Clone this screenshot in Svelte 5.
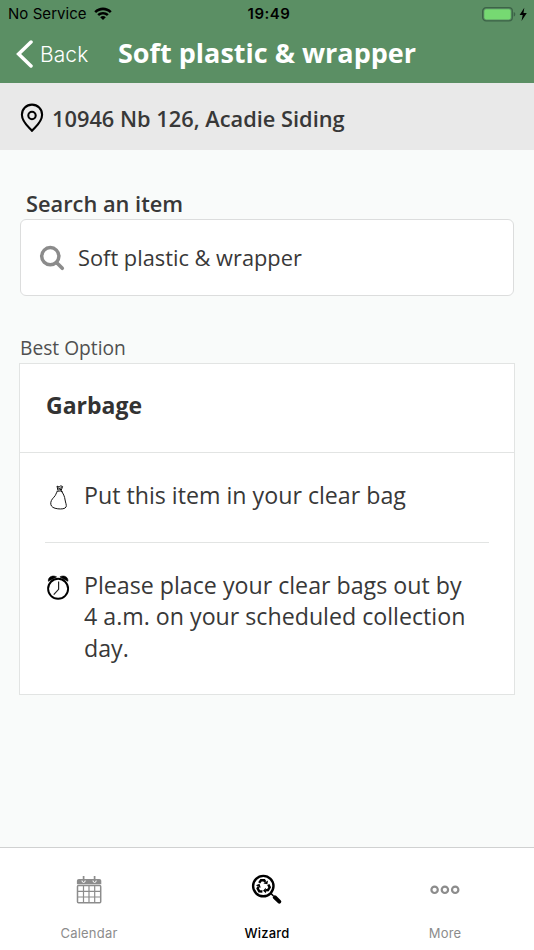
<script lang="ts">
  const address = '10946 Nb 126, Acadie Siding';
  const tabs = [
    { id: 'calendar', label: 'Calendar' },
    { id: 'wizard', label: 'Wizard' },
    { id: 'more', label: 'More' }
  ];
  // the three arrows of the recycling sign are one shape, turned
  const turns = [0, 120, 240];

  let item = $state('Soft plastic & wrapper');
  let activeTab = $state('wizard');
</script>

<div class="screen">
  <header>
    <div class="status-bar">
      <div class="carrier">
        <span>No Service</span>
        <svg width="18" height="14" viewBox="0 0 18 14">
          <path d="M0.3 4.3C5.3-.7 12.7-.7 17.7 4.3L15.9 6.1C11.9 2.3 6.1 2.3 2.1 6.1Z" />
          <path d="M3.3 7.3C6.6 4.2 11.4 4.2 14.7 7.3L12.9 9.1C10.6 7.1 7.4 7.1 5.1 9.1Z" />
          <path d="M6.2 10.2C7.9 8.7 10.1 8.7 11.8 10.2L9 13.1Z" />
        </svg>
      </div>
      <span class="time">19:49</span>
      <div class="battery">
        <svg width="46" height="16" viewBox="0 0 46 16">
          <rect x="0.7" y="1.7" width="29.6" height="13.2" rx="3.4" fill="none" stroke="#3c6347" stroke-width="1.3" />
          <rect x="2.3" y="3.2" width="26.4" height="10.2" rx="1.8" fill="#76d972" />
          <path d="M31.7 6C33.8 6.7 33.8 9.9 31.7 10.6Z" fill="#3c6347" />
          <path d="M42.3 1.8L37.6 9H40.7L39.5 14.9L44.8 7H41.5Z" />
        </svg>
      </div>
    </div>
    <div class="nav-bar">
      <button class="back">
        <svg width="17" height="28" viewBox="0 0 17 28">
          <path d="M15 2L2.6 14L15 26" fill="none" stroke="#fff" stroke-width="3.5" stroke-linecap="round" />
        </svg>
        <span>Back</span>
      </button>
      <h1>Soft plastic &amp; wrapper</h1>
    </div>
  </header>

  <div class="address">
    <svg width="24" height="30" viewBox="0 0 24 30">
      <g fill="none" stroke="#000">
        <path d="M12 27.8C9.5 24.6 1.9 19.3 1.9 11.7A10.1 10.1 0 0 1 22.1 11.7C22.1 19.3 14.5 24.6 12 27.8Z" stroke-width="2.1" stroke-linejoin="round" />
        <circle cx="12" cy="12.5" r="3.7" stroke-width="2.1" />
      </g>
    </svg>
    <span>{address}</span>
  </div>

  <main>
    <label for="item">Search an item</label>
    <div class="search">
      <svg width="26" height="26" viewBox="0 0 26 26">
        <g fill="none" stroke="#8b8b8b" stroke-linecap="round">
          <circle cx="11.3" cy="11.2" r="8.6" stroke-width="3.5" />
          <path d="M18 18L23.3 23.3" stroke-width="3.6" />
        </g>
      </svg>
      <input id="item" type="text" bind:value={item} />
    </div>

    <h2>Best Option</h2>
    <section class="card">
      <h3>Garbage</h3>
      <div class="step">
        <svg width="26" height="26" viewBox="0 0 26 26">
          <g fill="none" stroke="#111" stroke-width="1" stroke-linejoin="round">
            <path d="M12.3 7.5C10.9 9.3 11.1 11 8.9 13.2C6.8 15.3 5.4 17.6 5.8 20.3C6.2 23 8.8 24.3 12.8 24.8C16.1 25.2 20.3 25 21.1 22.9C21.8 21 20.5 18.8 20.1 16C19.7 12.6 18.3 9.4 16.2 7" />
            <path d="M11.6 7.3L16.8 6.8M12.9 6.3L12 2.1L14.1 3L15.8 1.8L17.6 2.5L16.2 6.3M12.8 3.6L16.2 6M16.8 3L13.3 6M15.8 6.8L18 8.3" />
          </g>
        </svg>
        <p>Put this item in your clear bag</p>
      </div>
      <div class="step">
        <svg width="26" height="26" viewBox="0 0 26 26">
          <circle cx="13.1" cy="14.8" r="10" fill="none" stroke="#000" stroke-width="1.9" />
          <path d="M3.4 7.3C2.6 3.2 7.6.6 11.6 2.9ZM14.9 2.9C18.9.6 23.6 3.2 22.9 7.3Z" stroke="#000" stroke-width="0.6" />
          <path d="M13.6 7.6V15.3L8.7 20.6" fill="none" stroke="#222" stroke-width="1.2" />
        </svg>
        <p>Please place your clear bags out by 4&nbsp;a.m. on your scheduled collection day.</p>
      </div>
    </section>
  </main>

  <nav>
    {#each tabs as tab (tab.id)}
      <button class="tab" class:active={tab.id === activeTab} onclick={() => (activeTab = tab.id)}>
        <svg width="34" height="34" viewBox="0 0 34 34">
          {#if tab.id === 'calendar'}
            <path d="M4.9 11.2V7.7Q4.9 6 6.9 6H27.4Q29.3 6 29.3 7.7V11.2Z" />
            <g fill="none" stroke="currentColor">
              <rect x="5.5" y="12.6" width="23.2" height="17.2" rx="1" stroke-width="1.5" />
              <path d="M11.5 12.5V30M17 12.5V30M22.7 12.5V30M5.5 18.3H29M5.5 24H29" stroke-width="1.2" />
              <path d="M11.6 3V8M22.6 3V8" stroke-width="1.7" />
            </g>
            <path d="M10 7.5Q10 9.5 11.6 9.5T13.2 7.5M21 7.5Q21 9.5 22.6 9.5T24.2 7.5" fill="none" stroke="#fff" stroke-width="1" />
          {:else if tab.id === 'wizard'}
            <circle cx="13.3" cy="13.1" r="10.2" fill="none" stroke="currentColor" stroke-width="2.4" />
            {#each turns as turn}
              <g transform="rotate({turn} 13.3 13.3)">
                <path d="M9.2 9.9L11 7.3H14.2L15.3 9" fill="none" stroke="currentColor" stroke-width="2.5" />
                <path d="M13.4 10.4L17.4 11.3L18 7.4Z" />
              </g>
            {/each}
            <path d="M20.8 20.4L23.5 23" stroke="currentColor" stroke-width="1.5" />
            <path d="M24.8 24.3L29.3 28.6" stroke="currentColor" stroke-width="4" stroke-linecap="round" />
          {:else}
            <g fill="none" stroke="currentColor" stroke-width="2.2">
              <circle cx="6.6" cy="16.8" r="3.2" />
              <circle cx="16.9" cy="16.8" r="3.2" />
              <circle cx="27.2" cy="16.8" r="3.2" />
            </g>
          {/if}
        </svg>
        <span>{tab.label}</span>
      </button>
    {/each}
  </nav>
</div>

<style>
  :global(body) {
    margin: 0;
  }

  .screen {
    display: flex;
    flex-direction: column;
    height: 950px;
    background: #f9fbfa;
    color: #383838;
    font-family: 'Open Sans', sans-serif;
  }

  svg {
    display: block;
    flex: none;
  }

  button {
    padding: 0;
    border: none;
    background: none;
    cursor: pointer;
  }

  h1,
  h2,
  h3,
  p {
    margin: 0;
  }

  header {
    box-sizing: border-box;
    height: 83px;
    background: #5b8f64;
  }

  .status-bar {
    display: grid;
    grid-template-columns: 1fr auto 1fr;
    align-items: center;
    height: 27px;
    padding: 0 6px 0 8px;
    color: #000;
    font-family: Inter, sans-serif;
    font-size: 15px;
  }

  .carrier {
    display: flex;
    align-items: center;
    gap: 7px;
    letter-spacing: 0.05px;
  }

  .time {
    padding-left: 2px;
    font-weight: 600;
    letter-spacing: 0.5px;
  }

  .battery {
    justify-self: end;
  }

  .nav-bar {
    display: flex;
    align-items: center;
    height: 54px;
    padding-left: 16px;
  }

  .back {
    display: flex;
    align-items: center;
    gap: 7px;
    width: 102px;
    color: #fff;
    font-family: Inter, sans-serif;
    font-size: 21px;
    font-weight: 300;
    letter-spacing: 0.1px;
  }

  h1 {
    padding-bottom: 3px;
    color: #fff;
    font-size: 27px;
    font-weight: 700;
    line-height: 36px;
    white-space: nowrap;
  }

  .address {
    display: flex;
    align-items: center;
    gap: 8px;
    box-sizing: border-box;
    height: 67px;
    padding: 3px 20px 0;
    background: #e9e9e9;
    font-size: 21.8px;
    font-weight: 600;
  }

  main {
    flex: 1;
    padding: 39px 20px 0;
  }

  label {
    display: block;
    padding-left: 6px;
    font-size: 21.8px;
    font-weight: 600;
    line-height: 30px;
  }

  .search {
    display: flex;
    align-items: center;
    gap: 13px;
    box-sizing: border-box;
    height: 77px;
    padding: 0 18px;
    border: 1px solid #dcdddd;
    border-radius: 6px;
    background: #fff;
  }

  input {
    flex: 1;
    min-width: 0;
    padding: 0;
    border: none;
    outline: none;
    background: none;
    color: #383838;
    font: 21.8px 'Open Sans', sans-serif;
  }

  h2 {
    margin-top: 37px;
    padding-bottom: 1px;
    color: #505050;
    font-size: 19.2px;
    font-weight: 400;
    line-height: 29px;
  }

  .card {
    box-sizing: border-box;
    height: 332px;
    margin: 0 -1px;
    border: 1px solid #e2e4e3;
    background: #fff;
  }

  h3 {
    padding: 0 26px 6px;
    border-bottom: 1px solid #e2e4e3;
    color: #333;
    font-size: 23px;
    font-weight: 700;
    line-height: 82px;
  }

  .step {
    display: flex;
    gap: 13px;
    margin: 0 25px;
    padding: 27px 0 30px;
  }

  .step + .step {
    border-top: 1px solid #e2e4e3;
  }

  .step svg {
    margin-top: 4px;
  }

  .step p {
    font-size: 23.2px;
    line-height: 31.5px;
  }

  nav {
    display: grid;
    grid-template-columns: repeat(3, 1fr);
    box-sizing: border-box;
    height: 103px;
    border-top: 1px solid #d0d1d1;
    background: #fff;
  }

  .tab {
    display: flex;
    flex-direction: column;
    align-items: center;
    gap: 17px;
    padding-top: 25px;
    color: #8c8c8c;
    font-family: Inter, sans-serif;
    font-size: 13px;
    letter-spacing: 0.2px;
    line-height: 18px;
  }

  .tab svg {
    fill: currentColor;
  }

  .tab.active {
    color: #000;
    font-weight: 500;
  }
</style>
